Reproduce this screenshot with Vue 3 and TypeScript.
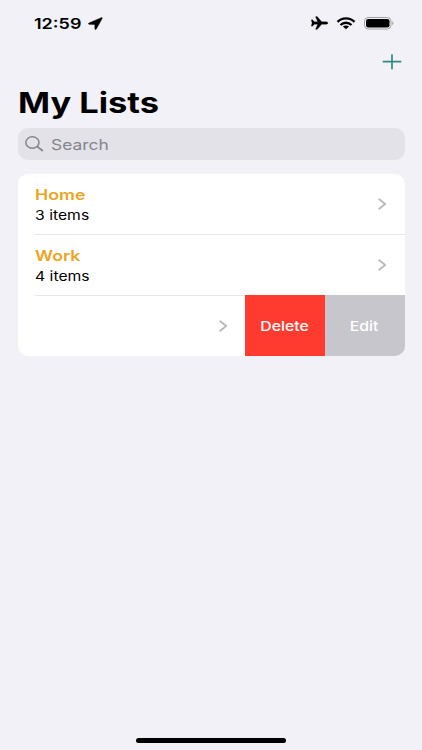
<script setup lang="ts">
interface TodoList {
  name: string
  count: number
}

const lists: TodoList[] = [
  { name: 'Home', count: 3 },
  { name: 'Work', count: 4 },
]
</script>

<template>
  <main class="screen">
    <header class="status">
      <div class="clock">
        <span class="wide time">12:59</span>
        <svg class="location" width="15" height="13" viewBox="0 0 15 13">
          <path d="M13.3.7 1 6c-.8.4-.6 1.3.2 1.3l5.6.1.1 4.500c0 .8 1 .9 1.400.2l5.800-10.600c.4-.7-.1-1.100-.8-.8Z" stroke="#000" stroke-width=".5" />
        </svg>
      </div>
      <div class="signals">
        <svg width="19" height="14" viewBox="0 0 19 14">
          <path d="M18 7c0-.7-1.100-1.300-2.600-1.300h-3.700L7.500.9C7.300.7 7.100.6 6.900.6H6c-.3 0-.4.2-.3.5l2 4.600H4.300L2.700 4c-.1-.2-.3-.2-.5-.2h-.6c-.2 0-.3.100-.3.3L2.100 7l-.8 2.900c0 .2.100.3.300.3h.6c.2 0 .4-.1.5-.2l1.600-1.700h3.400l-2 4.600c-.1.300 0 .5.300.5h.9c.2 0 .4-.1.600-.3l4.200-4.800h3.700C16.900 8.300 18 7.700 18 7Z" stroke="#000" stroke-width=".3" />
        </svg>
        <svg class="wifi" width="20" height="13" viewBox="0 0 20 13">
          <g fill="none" stroke="#000" stroke-width="2.300">
            <path d="M1.500 4.900C6.200.3 13.800.3 18.500 4.900" />
            <path d="M4.500 8C7.600 5 12.400 5 15.500 8" />
          </g>
          <path d="M6.900 9.500c1.800-1.500 4.400-1.500 6.200 0L10 12.300Z" />
        </svg>
        <svg class="battery" width="31" height="13" viewBox="0 0 31 13">
          <rect x=".5" y=".5" width="26.500" height="11.500" rx="3.600" fill="none" stroke="#a1a1a4" />
          <rect x="2" y="2" width="23.500" height="8.500" rx="2.200" />
          <path d="M28.200 4.300c1.700.6 1.700 3.300 0 3.900Z" fill="#a1a1a4" />
        </svg>
      </div>
    </header>

    <nav class="toolbar">
      <button class="add" aria-label="Add list">
        <svg width="20" height="16" viewBox="0 0 20 16">
          <path d="M.7 7.700h18.600M10 .2v15" fill="none" stroke="#2c8c80" stroke-width="1.700" />
        </svg>
      </button>
    </nav>

    <h1 class="title"><span class="wide">My Lists</span></h1>

    <div class="search">
      <svg width="19" height="16" viewBox="0 0 19 16">
        <g fill="none" stroke="#85858b" stroke-width="1.500" stroke-linecap="round">
          <ellipse cx="7.400" cy="6.500" rx="6.600" ry="5.700" />
          <path d="m12.400 10.600 4.900 3.900" stroke-width="1.800" />
        </g>
      </svg>
      <span class="wide placeholder">Search</span>
    </div>

    <section class="card">
      <article v-for="list in lists" :key="list.name" class="row">
        <div class="info">
          <div class="name"><span class="wide">{{ list.name }}</span></div>
          <div class="count"><span class="wide">{{ list.count }} items</span></div>
        </div>
        <svg class="chevron" width="9" height="12" viewBox="0 0 9 12">
          <path d="m1.200 1.200 6 4.800-6 4.800" />
        </svg>
      </article>
      <article class="swiped">
        <div class="rest">
          <svg class="chevron" width="9" height="12" viewBox="0 0 9 12">
            <path d="m1.200 1.200 6 4.800-6 4.800" />
          </svg>
        </div>
        <button class="action delete"><span class="wide">Delete</span></button>
        <button class="action edit"><span class="wide">Edit</span></button>
      </article>
    </section>

    <div class="home-bar"></div>
  </main>
</template>

<style>
body {
  background: #f2f1f7;
}
</style>

<style scoped>
.screen {
  box-sizing: border-box;
  display: flex;
  flex-direction: column;
  width: 422px;
  height: 750px;
  padding: 0 17.5px 7px;
  background: #f2f1f7;
  color: #000;
  font-family: Inter, "Liberation Sans", sans-serif;
}
svg {
  display: block;
  flex: none;
}
button {
  border: 0;
  padding: 0;
  font: inherit;
  background: none;
}
.wide {
  display: inline-block;
  white-space: nowrap;
  transform: scaleX(1.2);
  transform-origin: left center;
}
.status {
  display: flex;
  justify-content: space-between;
  align-items: center;
  height: 46px;
  padding: 0 9.5px 0 16.5px;
}
.clock,
.signals {
  display: flex;
  align-items: center;
}
.time {
  width: 54px;
  font-size: 15px;
  font-weight: 600;
}
.wifi {
  margin-left: 7px;
}
.battery {
  margin-left: 8.5px;
}
.toolbar {
  display: flex;
  justify-content: flex-end;
  height: 38px;
  padding: 8px 2.5px 0 0;
  box-sizing: border-box;
}
.add {
  height: 16px;
}
.title {
  height: 44px;
  margin: 0;
  font-size: 29px;
  font-weight: 700;
  line-height: 37px;
}
.title .wide {
  transform: scaleX(1.187);
}
.search {
  display: flex;
  align-items: center;
  height: 32px;
  padding-left: 7.5px;
  border-radius: 10px;
  background: #e3e2e8;
  color: #85858b;
  box-sizing: border-box;
}
.placeholder {
  margin-left: 7px;
  font-size: 14.5px;
}
.card {
  margin-top: 14px;
  border-radius: 10px;
  background: #fff;
  overflow: hidden;
}
.row {
  display: flex;
  align-items: center;
  justify-content: space-between;
  height: 60px;
  margin-left: 17.5px;
  padding-right: 17.5px;
  border-bottom: 1px solid #e6e6e9;
}
.name {
  height: 21px;
  color: #eba521;
  font-size: 14.5px;
  font-weight: 600;
  line-height: 21px;
}
.name .wide {
  transform: scaleX(1.22);
}
.count {
  height: 20px;
  font-size: 13px;
  line-height: 20px;
}
.count .wide {
  transform: scaleX(1.21);
}
.chevron path {
  fill: none;
  stroke: #b9b9bc;
  stroke-width: 1.8;
  stroke-linecap: round;
  stroke-linejoin: round;
}
.swiped {
  display: flex;
  height: 61px;
  margin-top: -1px;
}
.rest {
  display: flex;
  flex: 1;
  align-items: center;
  justify-content: flex-end;
  padding-right: 17px;
}
.action {
  width: 80px;
  color: #fff;
  font-size: 13.4px;
  font-weight: 500;
}
.action .wide {
  transform-origin: center;
  transform: scaleX(1.18);
}
.delete {
  background: #ff3b30;
}
.edit {
  background: #c7c6cc;
}
.home-bar {
  width: 150px;
  height: 5px;
  margin: auto auto 0 118.5px;
  border-radius: 3px;
  background: #000;
}
</style>
